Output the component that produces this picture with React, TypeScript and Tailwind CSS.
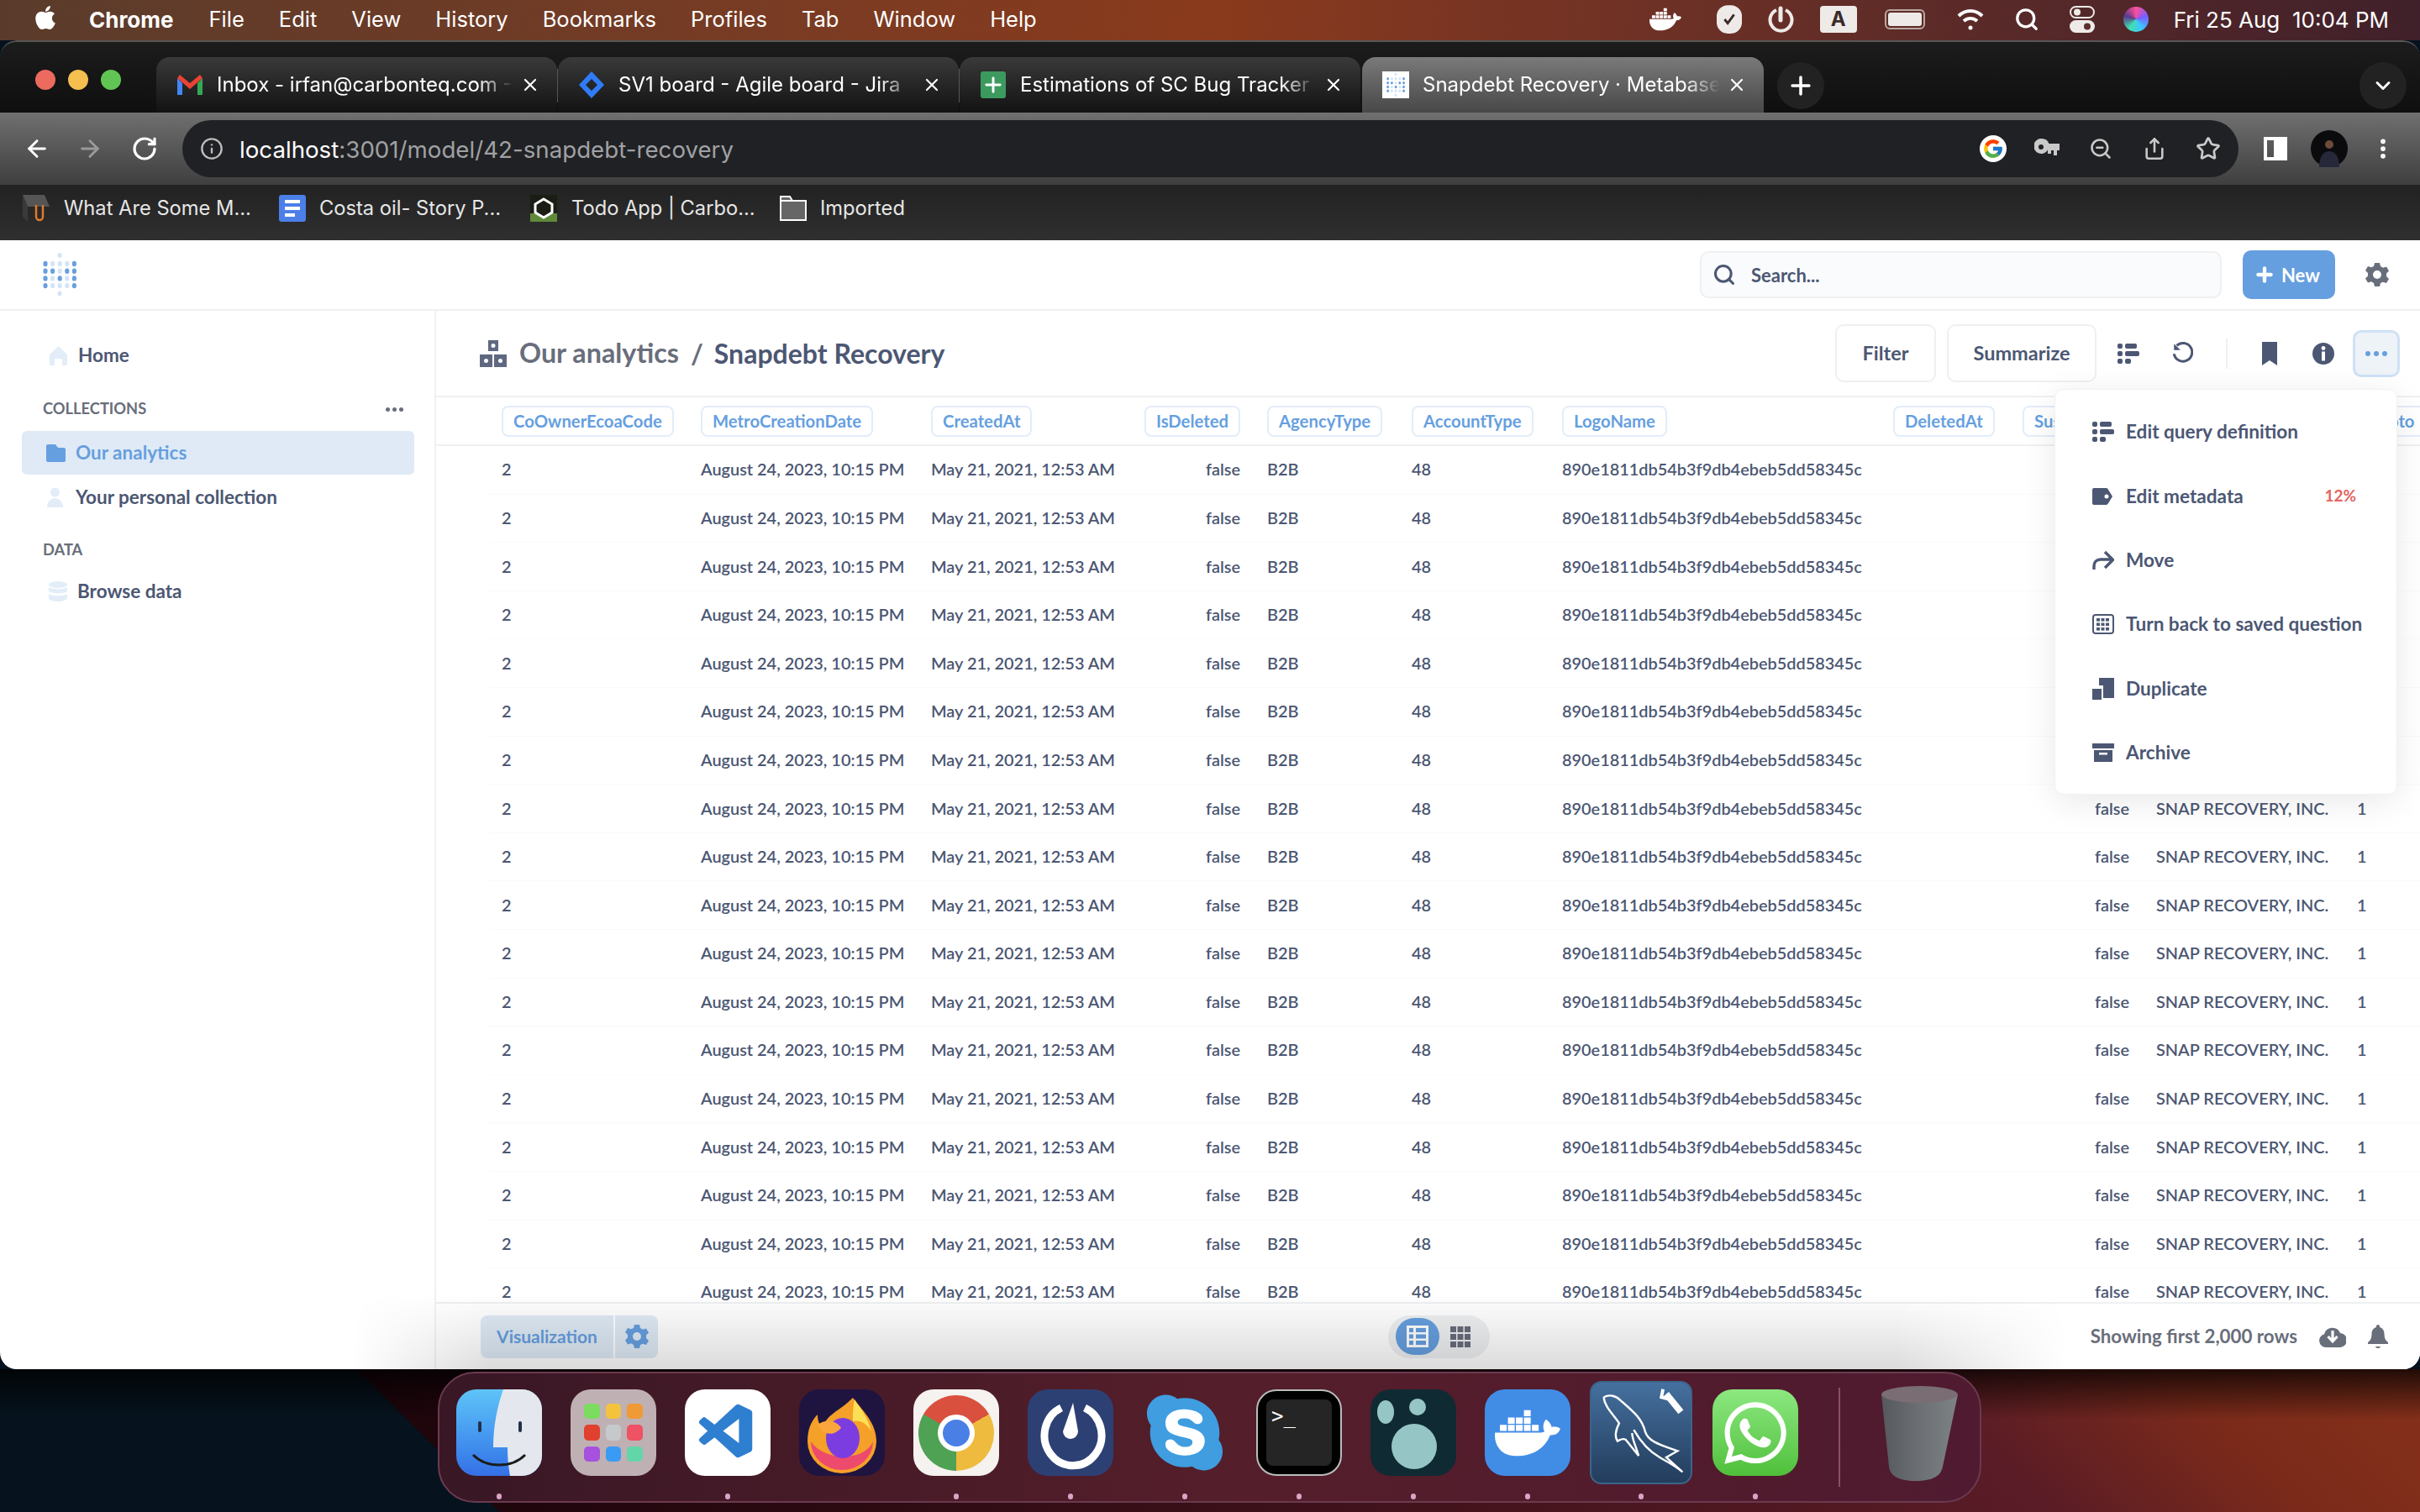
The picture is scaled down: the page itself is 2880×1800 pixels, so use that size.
import React from "react";
import { FaApple, FaDocker, FaSkype, FaWhatsapp } from "react-icons/fa";
import { FcGoogle } from "react-icons/fc";
import { VscVscode } from "react-icons/vsc";
import { ArrowLeft, ArrowRight, ChevronDown, EllipsisVertical, Info, Plus, RotateCw, Search, Share, Star, X, ZoomOut } from "lucide-react";

const MENU_ITEMS = ["File", "Edit", "View", "History", "Bookmarks", "Profiles", "Tab", "Window", "Help"];

const COLUMNS = [
  { name: "CoOwnerEcoaCode", value: "2", width: "w-[237px]", right: false },
  { name: "MetroCreationDate", value: "August 24, 2023, 10:15 PM", width: "w-[274px]", right: false },
  { name: "CreatedAt", value: "May 21, 2021, 12:53 AM", width: "w-[254px]", right: false },
  { name: "IsDeleted", value: "false", width: "w-[146px]", right: true },
  { name: "AgencyType", value: "B2B", width: "w-[172px]", right: false },
  { name: "AccountType", value: "48", width: "w-[179px]", right: false },
  { name: "LogoName", value: "890e1811db54b3f9db4ebeb5dd58345c", width: "w-[394px]", right: false },
  { name: "DeletedAt", value: "", width: "w-[156px]", right: false },
  { name: "Suspended", value: "false", width: "w-[157px]", right: true },
  { name: "CompanyName", value: "SNAP RECOVERY, INC.", width: "w-[239px]", right: false },
  { name: "Photo", value: "1", width: "w-[120px]", right: false },
];

const ROWS = Array.from({ length: 18 }, (_, i) => i);

function MetabaseLogo({ className }: { className?: string }) {
  const dark = [
    [1, 1, 1, 1, 1],
    [1, 1, 0, 1, 1],
    [1, 0, 1, 0, 1],
    [1, 0, 0, 0, 1],
  ];
  return (
    <svg viewBox="0 0 40 52" className={className}>
      <ellipse cx="20" cy="3" rx="2.6" ry="3" fill="#d5e4f6" />
      <ellipse cx="20" cy="48.5" rx="2.6" ry="3" fill="#d5e4f6" />
      {dark.map((row, r) =>
        row.map((d, c) => {
          const on = r === 0 ? c === 0 || c === 4 : d === 1;
          return <ellipse key={`${r}-${c}`} cx={3 + c * 8.6} cy={13 + r * 8.7} rx="2.6" ry="3.2" fill={on ? "#6a9fdf" : "#d5e4f6"} />;
        })
      )}
    </svg>
  );
}

function ListIcon({ className }: { className?: string }) {
  return (
    <svg viewBox="0 0 26 24" className={className} fill="currentColor">
      <rect x="0" y="0" width="6" height="6" rx="2" />
      <rect x="9" y="0" width="14" height="6" rx="2" />
      <rect x="0" y="9" width="6" height="6" rx="2" />
      <rect x="9" y="9" width="17" height="6" rx="2" />
      <rect x="0" y="18" width="6" height="6" rx="2" />
      <rect x="9" y="18" width="7" height="6" rx="2" />
    </svg>
  );
}

function TagIcon() {
  return (
    <svg viewBox="0 0 24 20" className="w-[24px] h-[20px]" fill="#4c5773">
      <path fillRule="evenodd" d="M2 0h14c1 0 2 .5 2.6 1.3L24 10l-5.4 8.7c-.6.8-1.6 1.3-2.6 1.3H2a2 2 0 0 1-2-2V2a2 2 0 0 1 2-2zm15 7.500a2.500 2.500 0 1 0 0 5 2.500 2.500 0 0 0 0-5z" />
    </svg>
  );
}

function MoveIcon() {
  return (
    <svg viewBox="0 0 26 24" className="w-[26px] h-[24px]" fill="none" stroke="#4c5773" strokeWidth="3.400">
      <path d="M2 23v-4c0-5 3-8 8-8h13" />
      <path d="M15 2l9.500 9.500L15 21" />
    </svg>
  );
}

function SavedQuestionIcon() {
  return (
    <svg viewBox="0 0 26 24" className="w-[26px] h-[24px]" fill="#4c5773">
      <rect x="1" y="1" width="24" height="22" rx="3" fill="none" stroke="#4c5773" strokeWidth="2" />
      {[5, 10.500, 16].map((y) => [5, 10.500, 16].map((x) => <rect key={`${x}${y}`} x={x} y={y} width="4" height="3.600" />))}
    </svg>
  );
}

function DuplicateIcon() {
  return (
    <svg viewBox="0 0 26 26" className="w-[26px] h-[26px]" fill="#4c5773">
      <path d="M8 0h18v24H13V9H8z" />
      <rect x="0" y="13" width="11" height="13" />
    </svg>
  );
}

function ArchiveIcon() {
  return (
    <svg viewBox="0 0 26 22" className="w-[26px] h-[22px]" fill="#4c5773">
      <rect width="26" height="6" />
      <path fillRule="evenodd" d="M2 8h22v14H2zm6 3v2.500h10V11z" />
    </svg>
  );
}

function PopoverItem({ icon, label, extra }: { icon: React.ReactNode; label: string; extra?: string }) {
  return (
    <div className="flex items-center h-[76.4px] pl-[44px] pr-[48px] whitespace-nowrap">
      <span className="w-[40px] shrink-0 flex items-center">{icon}</span>
      <span className="text-[22.600px] font-bold text-[#4c5773]">{label}</span>
      {extra && <span className="ml-auto text-[19px] font-bold text-[#e5645f]">{extra}</span>}
    </div>
  );
}

function TopTab({ icon, label, width, active }: { icon: React.ReactNode; label: string; width: string; active?: boolean }) {
  return (
    <div
      className={`${width} h-[66px] flex items-center pl-[24px] pr-[20px] rounded-t-[16px] ${
        active ? "bg-gradient-to-b from-[#7a7a7a] to-[#484848]" : "bg-gradient-to-b from-[#3a3a3a] to-[#131313]"
      }`}
    >
      <span className="w-[32px] h-[32px] flex items-center justify-center shrink-0">{icon}</span>
      <span className="ml-[16px] flex-1 whitespace-nowrap overflow-hidden text-[24px] text-white [mask-image:linear-gradient(to_right,black_88%,transparent)]">{label}</span>
      <X className="ml-[8px] shrink-0 w-[24px] h-[24px] text-white" strokeWidth={2.2} />
    </div>
  );
}

function MenuBar() {
  return (
    <div className="h-[48px] shrink-0 flex items-center pl-[40px] pr-[37px] pb-[2px] text-white text-[26px] font-['Inter',sans-serif] bg-gradient-to-r from-[#5a3b2b] via-[#8a3a1c] to-[#40202a]">
      <FaApple className="w-[28px] h-[32px] mb-[4px]" />
      <span className="ml-[38px] font-bold">Chrome</span>
      <div className="ml-[42px] flex gap-[41px] text-[25.500px]">
        {MENU_ITEMS.map((m) => (
          <span key={m}>{m}</span>
        ))}
      </div>
      <div className="ml-auto flex items-center">
        <FaDocker className="w-[38px] h-[32px]" />
        <svg viewBox="0 0 32 36" className="ml-[42px] w-[30px] h-[34px]">
          <rect width="32" height="36" rx="14" fill="#eeeae8" />
          <path d="M10 18l4 5 8-11" fill="none" stroke="#3a2a2a" strokeWidth="3" />
        </svg>
        <svg viewBox="0 0 32 32" className="ml-[30px] w-[32px] h-[32px]" fill="none" stroke="#eeeae8" strokeWidth="4">
          <path d="M22 5a13 13 0 1 1-11 0" />
          <path d="M16 3v14" strokeLinecap="round" strokeWidth="5" />
        </svg>
        <span className="ml-[31px] w-[44px] h-[32px] rounded-[4px] bg-[#eeeae8] text-[#3a2a2a] flex items-center justify-center text-[24px] font-bold">A</span>
        <span className="ml-[33px] w-[48px] h-[24px] rounded-[6px] border-2 border-[#b9a6a0] p-[2px] flex">
          <span className="flex-1 bg-[#eeeae8] rounded-[3px]" />
        </span>
        <svg viewBox="0 0 32 28" className="ml-[36px] w-[36px] h-[28px]" fill="none" stroke="white" strokeWidth="4">
          <path d="M2 10c8-8 20-8 28 0" />
          <path d="M8 16c5-4 11-4 16 0" />
          <circle cx="16" cy="24" r="2.500" fill="white" stroke="none" />
        </svg>
        <Search className="ml-[34px] w-[30px] h-[30px]" strokeWidth={2.6} />
        <svg viewBox="0 0 30 32" className="ml-[36px] w-[30px] h-[32px]">
          <rect x="1" y="1" width="28" height="13" rx="6.500" fill="none" stroke="#eeeae8" strokeWidth="2" />
          <circle cx="9" cy="7.500" r="4" fill="#eeeae8" />
          <rect x="0" y="17" width="30" height="15" rx="7.500" fill="#eeeae8" />
          <circle cx="21" cy="24.500" r="4" fill="#5a3030" />
        </svg>
        <span className="ml-[34px] w-[30px] h-[30px] rounded-full bg-[conic-gradient(#ff4f9a,#7a5cff,#3fc4ff,#3fe0b0,#5a3a8a,#ff4f9a)]" />
        <span className="ml-[30px]">Fri 25 Aug&nbsp;&nbsp;10:04 PM</span>
      </div>
    </div>
  );
}

function TabStrip() {
  return (
    <div className="h-[86px] shrink-0 flex items-end bg-gradient-to-b from-[#1c1c1c] to-[#0f0f0f] border-t-2 border-[#565656] rounded-t-[20px]">
      <div className="w-[186px] h-full flex items-center pl-[42px] gap-[15px] pt-[6px]">
        <span className="w-[24px] h-[24px] rounded-full bg-[#ec6a5e]" />
        <span className="w-[24px] h-[24px] rounded-full bg-[#f4bf4f]" />
        <span className="w-[24px] h-[24px] rounded-full bg-[#61c554]" />
      </div>
      <TopTab
        width="w-[477px]"
        label="Inbox - irfan@carbonteq.com - Gmail"
        icon={
          <svg viewBox="0 0 30 24" className="w-[30px] h-[24px]">
            <path d="M0 4v20h6V10z" fill="#4285f4" />
            <path d="M24 10v14h6V4z" fill="#34a853" />
            <path d="M0 4l3-4 12 10L27 0l3 4-15 13z" fill="#ea4335" />
          </svg>
        }
      />
      <span className="w-px h-[40px] mb-[12px] bg-[#555]" />
      <TopTab
        width="w-[477px]"
        label="SV1 board - Agile board - Jira"
        icon={
          <svg viewBox="0 0 30 32" className="w-[30px] h-[32px]" fill="#2f7cf6">
            <path fillRule="evenodd" d="M15 0l15 16-15 16L0 16zm0 9l-7 7 7 7 7-7z" />
          </svg>
        }
      />
      <span className="w-px h-[40px] mb-[12px] bg-[#555]" />
      <TopTab
        width="w-[477px]"
        label="Estimations of SC Bug Tracker - Google"
        icon={
          <span className="w-[30px] h-[32px] bg-[#3c9a5f] rounded-[3px] flex items-center justify-center">
            <Plus className="w-[28px] h-[28px] text-white" strokeWidth={2.5} />
          </span>
        }
      />
      <span className="w-[2px]" />
      <TopTab
        active
        width="w-[478px]"
        label="Snapdebt Recovery · Metabase"
        icon={
          <span className="w-[32px] h-[32px] bg-white flex items-center justify-center">
            <MetabaseLogo className="w-[22px] h-[30px]" />
          </span>
        }
      />
      <div className="ml-[16px] mb-[4px] w-[56px] h-[56px] rounded-full bg-[#222] flex items-center justify-center">
        <Plus className="w-[34px] h-[34px] text-white" strokeWidth={2.5} />
      </div>
      <div className="ml-auto mr-[16px] mb-[4px] w-[56px] h-[56px] rounded-full bg-[#222] flex items-center justify-center">
        <ChevronDown className="w-[28px] h-[28px] text-white" strokeWidth={2.5} />
      </div>
    </div>
  );
}

function Toolbar() {
  const iconClass = "w-[64px] flex items-center justify-center text-[#c9c9c9]";
  return (
    <div className="h-[86px] shrink-0 flex items-center pl-[28px] bg-gradient-to-b from-[#707070] to-[#3f3f3f]">
      <ArrowLeft className="w-[32px] h-[32px] text-white" strokeWidth={2.2} />
      <ArrowRight className="ml-[31px] w-[32px] h-[32px] text-[#9a9a9a]" strokeWidth={2.2} />
      <RotateCw className="ml-[33px] w-[32px] h-[32px] text-white" strokeWidth={2.4} />
      <div className="ml-[29px] w-[2447px] h-[68px] rounded-full bg-[#202124] flex items-center pl-[21px]">
        <Info className="w-[28px] h-[28px] text-[#bdbdbd]" strokeWidth={2} />
        <span className="ml-[19px] pt-[3px] text-[27.700px] text-white">
          localhost<span className="text-[#a0a1a4]">:3001/model/42-snapdebt-recovery</span>
        </span>
        <div className="ml-auto flex items-center pr-[4px]">
          <span className={iconClass}>
            <span className="w-[32px] h-[32px] rounded-full bg-white flex items-center justify-center">
              <FcGoogle className="w-[26px] h-[26px]" />
            </span>
          </span>
          <span className={iconClass}>
            <svg viewBox="0 0 30 24" className="w-[30px] h-[24px]" fill="#c9c9c9">
              <path fillRule="evenodd" d="M9 0a9 9 0 0 1 8.500 6H30v8h-3v6h-4v-6h-3v4h-4v-4.500A9 9 0 1 1 9 0zM8 7a3 3 0 1 0 0 6 3 3 0 0 0 0-6z" />
            </svg>
          </span>
          <span className={iconClass}>
            <ZoomOut className="w-[28px] h-[28px]" strokeWidth={2.2} />
          </span>
          <span className={iconClass}>
            <Share className="w-[28px] h-[30px]" strokeWidth={2.2} />
          </span>
          <span className={iconClass}>
            <Star className="w-[30px] h-[30px]" strokeWidth={2.2} />
          </span>
        </div>
      </div>
      <div className="ml-[12px] flex items-center">
        <span className="w-[64px] flex justify-center">
          <span className="w-[28px] h-[28px] border-[4px] border-white flex justify-end">
            <span className="w-[12px] bg-white" />
          </span>
        </span>
        <span className="w-[64px] flex justify-center">
          <svg viewBox="0 0 44 44" className="w-[44px] h-[44px]">
            <circle cx="22" cy="22" r="22" fill="#0b0b0d" />
            <circle cx="22" cy="17" r="5" fill="#6d4a3a" />
            <path d="M10 44c0-14 6-19 12-19s12 5 12 19z" fill="#26283a" />
          </svg>
        </span>
        <span className="w-[64px] flex justify-center">
          <EllipsisVertical className="w-[30px] h-[30px] text-white" strokeWidth={2.6} />
        </span>
      </div>
    </div>
  );
}

function BookmarksBar() {
  return (
    <div className="h-[66px] shrink-0 flex items-center pl-[27px] pb-[10px] text-[23.700px] text-[#e6e6e6] bg-gradient-to-b from-[#222] to-[#2f2f2f]">
      <svg viewBox="0 0 32 32" className="w-[32px] h-[32px] shrink-0">
        <path d="M0 0h26l6 14H6z" fill="#555" />
        <path d="M0 0l6 14v18L0 26z" fill="#3a3a3a" />
        <path d="M16 12v14a4 4 0 0 0 8 0V12" fill="none" stroke="#e07a2c" strokeWidth="2.500" />
      </svg>
      <span className="ml-[17px] w-[256px]">What Are Some M...</span>
      <span className="w-[32px] h-[32px] shrink-0 bg-[#4c7fe8] rounded-[3px] flex flex-col justify-center gap-[4px] pl-[7px]">
        <span className="w-[18px] h-[4px] bg-white" />
        <span className="w-[18px] h-[4px] bg-white" />
        <span className="w-[12px] h-[4px] bg-white" />
      </span>
      <span className="ml-[16px] w-[251px]">Costa oil- Story P...</span>
      <svg viewBox="0 0 32 32" className="w-[32px] h-[32px] shrink-0">
        <rect width="32" height="32" fill="#1a1d14" />
        <path d="M0 22h32v10H0z" fill="#5f8a3a" />
        <path d="M16 5l10 6v10l-10 6-10-6V11z" fill="#1a1d14" stroke="white" strokeWidth="3" />
      </svg>
      <span className="ml-[17px] w-[248px]">Todo App | Carbo...</span>
      <svg viewBox="0 0 32 32" className="w-[32px] h-[32px] shrink-0">
        <path d="M1 2h11l3 5h16v23H1z" fill="#666" stroke="white" strokeWidth="2" />
        <path d="M1 7h30" stroke="white" strokeWidth="2" />
      </svg>
      <span className="ml-[16px]">Imported</span>
    </div>
  );
}

function AppHeader() {
  return (
    <div className="h-[84px] shrink-0 flex items-center pl-[50px] pr-[37px] border-b-2 border-[#eef0f1]">
      <MetabaseLogo className="w-[42px] h-[52px]" />
      <div className="ml-auto w-[621px] h-[56px] rounded-[10px] border-2 border-[#eef0f1] bg-[#f9fbfc] flex items-center pl-[13px]">
        <Search className="w-[28px] h-[28px] text-[#4c5773]" strokeWidth={2.6} />
        <span className="ml-[18px] text-[22px] font-bold text-[#4c5773]">Search...</span>
      </div>
      <div className="ml-[25px] w-[110px] h-[58px] rounded-[10px] bg-[#669fdf] flex items-center pl-[13px] text-white">
        <Plus className="w-[26px] h-[26px]" strokeWidth={4} />
        <span className="ml-[7px] text-[22px] font-bold">New</span>
      </div>
      <svg viewBox="0 0 28 28" className="ml-[36px] w-[28px] h-[28px]" fill="#696e7b">
        <path
          fillRule="evenodd"
          d="M11 0h6l1 4 3 1.700 4-1.200 3 5-3 3v3.400l3 3-3 5-4-1.200L18 24l-1 4h-6l-1-4-3-1.700-4 1.200-3-5 3-3v-3.400l-3-3 3-5 4 1.200L10 4zm3 9a5 5 0 1 0 0 10 5 5 0 0 0 0-10z"
        />
      </svg>
    </div>
  );
}

function Sidebar() {
  return (
    <div className="w-[519px] shrink-0 border-r-2 border-[#f0f1f3] pt-[27px] text-[22.500px] font-bold text-[#4c5773]">
      <div className="h-[52px] flex items-center pl-[59px]">
        <svg viewBox="0 0 21 23" className="w-[21px] h-[23px]" fill="#e3edf8">
          <path d="M10.500 0L21 10v13h-6v-8H6v8H0V10z" />
        </svg>
        <span className="ml-[13px]">Home</span>
      </div>
      <div className="mt-[23px] h-[30px] flex items-center pl-[51px] pr-[37px] text-[18.300px] text-[#696e7b]">
        COLLECTIONS
        <span className="ml-auto flex gap-[3px]">
          <span className="w-[5px] h-[5px] rounded-full bg-[#696e7b]" />
          <span className="w-[5px] h-[5px] rounded-full bg-[#696e7b]" />
          <span className="w-[5px] h-[5px] rounded-full bg-[#696e7b]" />
        </span>
      </div>
      <div className="mt-[11px] ml-[26px] w-[467px] h-[52px] rounded-[6px] bg-[#dfeaf6] flex items-center pl-[29px] text-[#669fdf]">
        <svg viewBox="0 0 23 21" className="w-[23px] h-[21px]" fill="#669fdf">
          <path d="M2 0h9l3 4h7a2 2 0 0 1 2 2v13a2 2 0 0 1-2 2H2a2 2 0 0 1-2-2V2a2 2 0 0 1 2-2z" />
        </svg>
        <span className="ml-[12px]">Our analytics</span>
      </div>
      <div className="h-[53px] flex items-center pl-[56px]">
        <svg viewBox="0 0 19 24" className="w-[19px] h-[24px]" fill="#e3edf8">
          <circle cx="9.500" cy="6" r="5.500" />
          <path d="M0 24c0-6 4-11 9.500-11S19 18 19 24z" />
        </svg>
        <span className="ml-[15px]">Your personal collection</span>
      </div>
      <div className="mt-[22px] h-[30px] flex items-center pl-[51px] text-[18.300px] text-[#696e7b]">DATA</div>
      <div className="mt-[8px] h-[52px] flex items-center pl-[58px]">
        <svg viewBox="0 0 22 24" className="w-[22px] h-[24px]" fill="#e3edf8">
          <ellipse cx="11" cy="4" rx="11" ry="4" />
          <path d="M0 7c3 3 19 3 22 0v5c-3 3-19 3-22 0zM0 15c3 3 19 3 22 0v5c0 2-5 4-11 4S0 22 0 20z" />
        </svg>
        <span className="ml-[12px]">Browse data</span>
      </div>
    </div>
  );
}

function QuestionHeader() {
  return (
    <div className="h-[103px] shrink-0 flex items-center pl-[52px] pr-[24px] border-b-2 border-[#eef0f1] text-[#4c5773]">
      <svg viewBox="0 0 32 32" className="w-[32px] h-[32px]" fill="#5f6880">
        <path fillRule="evenodd" d="M10 0h12v13H10zm6 4a2.500 2.500 0 1 0 0 5 2.500 2.500 0 0 0 0-5zM0 17h15v15H0zm7.500 5a2.500 2.500 0 1 0 0 5 2.500 2.500 0 0 0 0-5zM17 17h15v15H17zm7.500 5a2.500 2.500 0 1 0 0 5 2.500 2.500 0 0 0 0-5z" />
      </svg>
      <span className="ml-[15px] text-[32.300px] font-bold text-[#696e7b]">Our analytics</span>
      <span className="ml-[14px] text-[32px] font-bold text-[#696e7b]">/</span>
      <span className="ml-[13px] text-[32px] font-bold">Snapdebt Recovery</span>
      <div className="ml-auto flex items-center">
        <div className="w-[120px] h-[69px] rounded-[10px] border-2 border-[#eef0f1] flex items-center justify-center text-[23.500px] font-bold">Filter</div>
        <div className="ml-[13px] w-[178px] h-[69px] rounded-[10px] border-2 border-[#eef0f1] flex items-center justify-center text-[23.500px] font-bold">Summarize</div>
        <ListIcon className="ml-[24px] w-[28px] h-[24px]" />
        <svg viewBox="0 0 24 24" className="ml-[37px] w-[26px] h-[26px] mb-[3px]" fill="none" stroke="#4c5773" strokeWidth="2.800">
          <path d="M6 5a10 10 0 1 1-3 9" />
          <path d="M3 3v7h7" fill="#4c5773" stroke="none" />
        </svg>
        <span className="ml-[39px] w-[2px] h-[36px] bg-[#eef0f1]" />
        <svg viewBox="0 0 18 28" className="ml-[41px] w-[18px] h-[28px]" fill="#4c5773">
          <path d="M0 0h18v28l-9-6-9 6z" />
        </svg>
        <svg viewBox="0 0 26 26" className="ml-[42px] w-[26px] h-[26px]">
          <circle cx="13" cy="13" r="13" fill="#4c5773" />
          <rect x="11" y="10.500" width="4" height="11" fill="white" />
          <circle cx="13" cy="6.500" r="2.400" fill="white" />
        </svg>
        <div className="ml-[22px] w-[56px] h-[56px] rounded-[10px] bg-[#eef3f8] border-[3px] border-[#cfe1f5] flex items-center justify-center gap-[4px]">
          <span className="w-[6px] h-[6px] rounded-full bg-[#669fdf]" />
          <span className="w-[6px] h-[6px] rounded-full bg-[#669fdf]" />
          <span className="w-[6px] h-[6px] rounded-full bg-[#669fdf]" />
        </div>
      </div>
    </div>
  );
}

function ResultTable() {
  return (
    <div className="flex-1 min-h-0 overflow-hidden">
      <div className="h-[58px] flex items-center pl-[78px] border-b-2 border-[#eef0f1]">
        {COLUMNS.map((c) => (
          <div key={c.name} className={`${c.width} shrink-0 flex ${c.right ? "justify-end pr-[32px]" : ""}`}>
            <span className="h-[37px] px-[12px] rounded-[8px] border-2 border-[#e3edf8] flex items-center text-[20.300px] font-bold text-[#669fdf]">{c.name}</span>
          </div>
        ))}
      </div>
      {ROWS.map((r) => (
        <div key={r} className="ml-[62px] h-[57.600px] pl-[16px] flex items-center border-b border-[#f9fafb] text-[19.900px] font-semibold text-[#4c5773] whitespace-nowrap">
          {COLUMNS.map((c) => (
            <div key={c.name} className={`${c.width} shrink-0 ${c.right ? "text-right pr-[32px]" : ""}`}>
              {c.value}
            </div>
          ))}
        </div>
      ))}
    </div>
  );
}

function Footer() {
  return (
    <div className="h-[80px] shrink-0 flex items-center pl-[53px] pr-[38px] border-t-2 border-[#eef0f1] text-[#696e7b] bg-white">
      <div className="w-[158px] h-[51px] rounded-l-[8px] bg-[#dfeaf6] flex items-center justify-center text-[21px] font-bold text-[#669fdf]">Visualization</div>
      <div className="ml-[2px] w-[51px] h-[51px] rounded-r-[8px] bg-[#dfeaf6] flex items-center justify-center">
        <svg viewBox="0 0 28 28" className="w-[28px] h-[28px]" fill="#669fdf">
          <path
            fillRule="evenodd"
            d="M11 0h6l1 4 3 1.700 4-1.200 3 5-3 3v3.400l3 3-3 5-4-1.200L18 24l-1 4h-6l-1-4-3-1.700-4 1.200-3-5 3-3v-3.400l-3-3 3-5 4 1.200L10 4zm3 9a5 5 0 1 0 0 10 5 5 0 0 0 0-10z"
          />
        </svg>
      </div>
      <div className="ml-[869px] w-[121px] h-[51px] rounded-full bg-[#eef0f2] flex items-center pl-[9px]">
        <span className="w-[52px] h-[44px] rounded-full bg-[#669fdf] flex items-center justify-center">
          <svg viewBox="0 0 26 26" className="w-[26px] h-[26px]" fill="white">
            <path fillRule="evenodd" d="M0 0h26v26H0zm3 3v5h5V3zm8 0v5h12V3zM3 10.500v5h5v-5zm8 0v5h12v-5zM3 18v5h5v-5zm8 0v5h12v-5z" />
          </svg>
        </span>
        <svg viewBox="0 0 24 25" className="ml-[13px] w-[24px] h-[25px]" fill="#696e7b">
          <path d="M0 0h7v7H0zM8.500 0h7v7h-7zM17 0h7v7h-7zM0 9h7v7H0zM8.500 9h7v7h-7zM17 9h7v7h-7zM0 18h7v7H0zM8.500 18h7v7h-7zM17 18h7v7h-7z" />
        </svg>
      </div>
      <span className="ml-auto text-[22.300px] font-bold">Showing first 2,000 rows</span>
      <svg viewBox="0 0 32 26" className="ml-[26px] w-[32px] h-[26px]">
        <path d="M8 26a8 8 0 0 1-2-15.700A10 10 0 0 1 25 9a8.500 8.500 0 0 1-1 17z" fill="#696e7b" />
        <path d="M16 6v12M10.500 13l5.500 6 5.500-6" fill="none" stroke="white" strokeWidth="3.200" />
      </svg>
      <svg viewBox="0 0 24 28" className="ml-[26px] w-[24px] h-[28px]" fill="#696e7b">
        <path d="M12 0c1.200 0 2 .8 2 2v1c3.500 1 5.500 4 5.500 8 0 5 1.500 8 4.500 10v2H0v-2c3-2 4.500-5 4.500-10 0-4 2-7 5.500-8V2c0-1.200.8-2 2-2zM9 26h6c0 1.200-1.300 2-3 2s-3-.8-3-2z" />
      </svg>
    </div>
  );
}

function ActionsPopover() {
  return (
    <div className="absolute left-[2445px] top-[177px] w-[408px] h-[483px] rounded-[10px] bg-white border border-[#f0f1f3] shadow-[0_8px_40px_rgba(0,0,0,0.09)] py-[12px]">
      <PopoverItem label="Edit query definition" icon={<ListIcon className="w-[26px] h-[24px] text-[#4c5773]" />} />
      <PopoverItem label="Edit metadata" extra="12%" icon={<TagIcon />} />
      <PopoverItem label="Move" icon={<MoveIcon />} />
      <PopoverItem label="Turn back to saved question" icon={<SavedQuestionIcon />} />
      <PopoverItem label="Duplicate" icon={<DuplicateIcon />} />
      <PopoverItem label="Archive" icon={<ArchiveIcon />} />
    </div>
  );
}

function DockApp({ children, running = true, wide }: { children: React.ReactNode; running?: boolean; wide?: boolean }) {
  return (
    <div className={`${wide ? "w-[122px]" : "w-[102px]"} shrink-0 flex flex-col items-center`}>
      <div className="h-[103px] flex items-center justify-center">{children}</div>
      <span className={`mt-[21px] w-[6px] h-[7px] rounded-full ${running ? "bg-[#d9a5c4]" : ""}`} />
    </div>
  );
}

function Dock() {
  const tile = "w-[102px] h-[103px] rounded-[24px] overflow-hidden relative";
  return (
    <div className="mt-[3px] ml-[521px] w-[1837px] h-[156px] rounded-[44px] border-2 border-[#6b3a50] bg-gradient-to-r from-[#391725] via-[#541e2a] to-[#501a30] flex pl-[20px] pt-[19px]">
      <div className="flex gap-[34px]">
        <DockApp>
          <div className={`${tile} bg-gradient-to-b from-[#5fc4f8] to-[#3570e6]`}>
            <svg viewBox="0 0 102 103" className="w-full h-full">
              <path d="M56 0h46v103H64c-2-12-3-20-3-34H44c0-24 4-46 12-69z" fill="#e4e8ee" />
              <rect x="26" y="38" width="4" height="13" rx="2" fill="#22304a" />
              <rect x="74" y="38" width="4" height="13" rx="2" fill="#22304a" />
              <path d="M20 78c16 16 46 16 62 0" fill="none" stroke="#1c1c1c" strokeWidth="3" />
            </svg>
          </div>
        </DockApp>
        <DockApp running={false}>
          <div className={`${tile} bg-[#bfb0b4] grid grid-cols-3 gap-[7px] px-[16px] py-[17px]`}>
            {["#7bdc5f", "#f3c33e", "#ef9a35", "#e2402f", "#c5c9cc", "#ee5263", "#a652de", "#3a9bf5", "#62d6a8"].map((c) => (
              <span key={c} className="rounded-[5px]" style={{ backgroundColor: c }} />
            ))}
          </div>
        </DockApp>
        <DockApp>
          <div className={`${tile} bg-white flex items-center justify-center`}>
            <VscVscode className="w-[78px] h-[78px] text-[#2f7fd0]" />
          </div>
        </DockApp>
        <DockApp running={false}>
          <div className={`${tile} bg-[#1f1440]`}>
            <svg viewBox="0 0 102 103" className="w-full h-full">
              <path d="M64 10c12 16 28 30 28 52a41 38 0 0 1-82 0c0-14 4-24 12-32 0 8 2 12 6 16 4-16 20-20 36-36z" fill="#f5a028" />
              <path d="M66 12c8 12 16 22 20 38-6-10-14-14-22-12 0-10 0-16 2-26z" fill="#fcdf56" />
              <path d="M14 62a37 34 0 0 0 74 0c-10 24-58 24-74 0z" fill="#ee4a6d" />
              <ellipse cx="52" cy="58" rx="20" ry="24" fill="#7c3de0" />
              <path d="M22 42c10-8 24-4 28 4-6 6-10 8-18 6-4-2-8-6-10-10z" fill="#fba63c" />
            </svg>
          </div>
        </DockApp>
        <DockApp>
          <div className={`${tile} bg-[#f5f2ef] flex items-center justify-center`}>
            <span className="w-[90px] h-[90px] rounded-full bg-[conic-gradient(from_300deg,#d9503f_0deg_120deg,#efbb3e_120deg_240deg,#4fa153_240deg_360deg)] flex items-center justify-center">
              <span className="w-[44px] h-[44px] rounded-full bg-[#4a7fe6] border-[6px] border-white" />
            </span>
          </div>
        </DockApp>
        <DockApp>
          <div className={`${tile} bg-[#2d4074]`}>
            <svg viewBox="0 0 102 103" className="w-full h-full" fill="none">
              <path d="M68 22a34 36 0 1 1-28 0" stroke="white" strokeWidth="9" />
              <path d="M54 16l6 34a9 9 0 0 1-18 0z" fill="white" />
            </svg>
          </div>
        </DockApp>
        <DockApp>
          <div className="w-[102px] h-[103px] relative flex items-center justify-center">
            <span className="absolute w-[66px] h-[66px] rounded-full bg-white" />
            <FaSkype className="relative w-[102px] h-[103px] text-[#3f9de0]" />
          </div>
        </DockApp>
        <DockApp>
          <div className={`${tile} bg-black border-2 border-[#b9bcbc] p-[10px]`}>
            <div className="w-full h-full rounded-[8px] bg-[#252525] px-[6px] py-[8px] flex items-start text-white text-[24px] leading-none font-['DejaVu_Sans_Mono',monospace]">&gt;_</div>
          </div>
        </DockApp>
        <DockApp>
          <div className={`${tile} bg-[#102a33]`}>
            <svg viewBox="0 0 102 103" className="w-full h-full" fill="#95c6c5">
              <ellipse cx="18" cy="27" rx="10" ry="14" />
              <ellipse cx="56" cy="21" rx="10" ry="10" />
              <ellipse cx="52" cy="68" rx="27" ry="27" />
            </svg>
          </div>
        </DockApp>
      </div>
      <div className="ml-[34px]">
        <DockApp>
          <div className={`${tile} bg-[#418de6] flex items-center justify-center`}>
            <FaDocker className="w-[78px] h-[78px] text-white" />
          </div>
        </DockApp>
      </div>
      <div className="ml-[23px]">
        <DockApp wide>
          <div className="w-[122px] h-[123px] rounded-[14px] bg-gradient-to-b from-[#45709f] to-[#233d5c] border-2 border-[#3c6489]">
            <svg viewBox="0 0 122 123" className="w-full h-full" fill="none" stroke="white" strokeWidth="2.500">
              <path d="M15 18C22 14 30 16 36 22C52 36 62 44 66 60C70 74 90 78 106 84L92 92L112 110C100 100 90 96 84 92C70 84 60 72 52 58" />
              <path d="M15 18C16 30 28 40 34 50C30 58 28 66 32 72C36 70 38 68 42 70L58 90C54 76 50 70 50 62" />
              <path d="M92 14L110 36" strokeWidth="8" />
              <path d="M88 8l-2 10 8 2" strokeWidth="4" />
            </svg>
          </div>
        </DockApp>
      </div>
      <div className="ml-[24px]">
        <DockApp>
          <div className={`${tile} bg-gradient-to-b from-[#8ce87f] to-[#4fc03a] flex items-center justify-center`}>
            <FaWhatsapp className="w-[84px] h-[84px] text-white" />
          </div>
        </DockApp>
      </div>
      <span className="ml-[48px] mt-[-2px] w-[2px] h-[118px] bg-[#8b4f6a]" />
      <svg viewBox="0 0 91 113" className="ml-[49px] mt-[-4px] w-[91px] h-[113px]">
        <defs>
          <linearGradient id="trash" x1="0" x2="1" y1="0" y2="0">
            <stop offset="0" stopColor="#55585c" />
            <stop offset="0.5" stopColor="#6c7074" />
            <stop offset="1" stopColor="#7d8285" />
          </linearGradient>
        </defs>
        <path d="M0 10l9 86c1 10 10 17 32 17s30-7 32-17l18-86z" fill="url(#trash)" />
        <ellipse cx="45.500" cy="10" rx="45.500" ry="10" fill="#7a6d74" />
      </svg>
    </div>
  );
}

export default function App() {
  return (
    <div className="w-[2880px] h-[1800px] overflow-hidden flex flex-col bg-[#06131e] font-['Lato',sans-serif]">
      <MenuBar />
      <div className="relative h-[1582px] shrink-0 flex flex-col rounded-[20px] overflow-hidden font-['Inter',sans-serif]">
        <TabStrip />
        <Toolbar />
        <BookmarksBar />
        <div className="relative flex-1 min-h-0 flex flex-col bg-white font-['Lato',sans-serif]">
          <AppHeader />
          <div className="flex-1 min-h-0 flex">
            <Sidebar />
            <div className="flex-1 min-w-0 flex flex-col">
              <QuestionHeader />
              <ResultTable />
              <Footer />
            </div>
          </div>
          <ActionsPopover />
          {/* shadow the dock throws up onto the window */}
          <div className="absolute left-[420px] bottom-0 w-[2040px] h-[90px] pointer-events-none bg-gradient-to-b from-transparent to-[rgba(0,0,0,0.14)] [mask-image:linear-gradient(to_right,transparent,black_8%,black_90%,transparent)]" />
        </div>
      </div>
      <div className="flex-1 min-h-0 bg-[linear-gradient(to_bottom,rgba(0,0,0,0.75),transparent_60px),linear-gradient(45deg,#06131e_19.500%,#1f050c_19.500%,#5a1c26_80%,#7b2a1a_90%,#85301a_100%)]">
        <Dock />
      </div>
    </div>
  );
}
